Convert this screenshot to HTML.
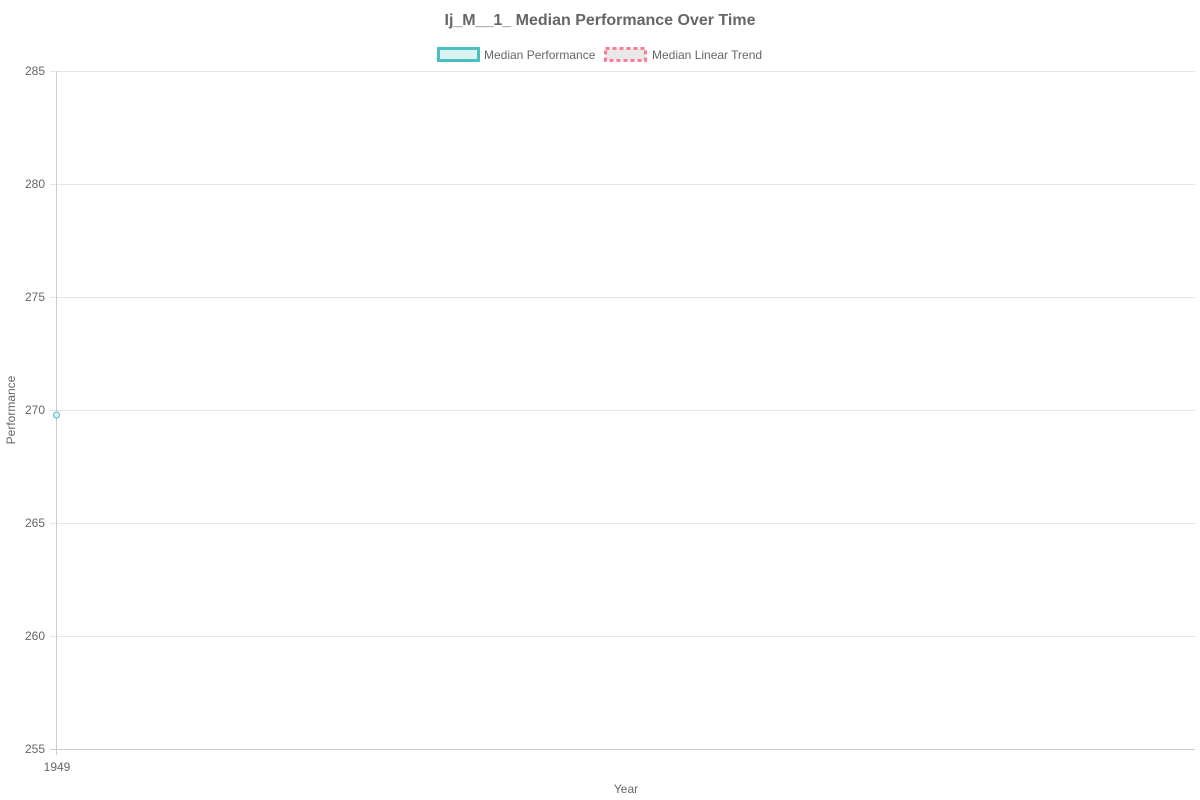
<!DOCTYPE html>
<html><head><style>html,body{margin:0;padding:0;background:#fff;}svg{display:block;}</style></head>
<body>
<svg width="1200" height="800" xmlns="http://www.w3.org/2000/svg" font-family="Liberation Sans, sans-serif">
<text x="600" y="25" text-anchor="middle" font-size="16" font-weight="bold" fill="#666">Ij_M__1_ Median Performance Over Time</text>
<rect x="438.5" y="48.5" width="40" height="12" fill="#dbf2f2" stroke="#4bc0c0" stroke-width="3"/>
<text x="484" y="59" font-size="12" fill="#666">Median Performance</text>
<rect x="605.5" y="48.5" width="40" height="12" fill="#e5e5e5" stroke="#ff6384" stroke-width="3" stroke-dasharray="4,3" opacity="0.85"/>
<text x="652" y="59" font-size="12" fill="#666">Median Linear Trend</text>
<g stroke="#e5e5e5" stroke-width="1">
<line x1="50" y1="71.5" x2="1195" y2="71.5"/>
<line x1="50" y1="184.5" x2="1195" y2="184.5"/>
<line x1="50" y1="297.5" x2="1195" y2="297.5"/>
<line x1="50" y1="410.5" x2="1195" y2="410.5"/>
<line x1="50" y1="523.5" x2="1195" y2="523.5"/>
<line x1="50" y1="636.5" x2="1195" y2="636.5"/>
</g>
<line x1="50" y1="749.5" x2="1195" y2="749.5" stroke="#ccc"/>
<line x1="56.5" y1="71" x2="56.5" y2="755" stroke="#ccc"/>
<g font-size="12" fill="#666" text-anchor="end">
<text x="45" y="75">285</text>
<text x="45" y="188">280</text>
<text x="45" y="301">275</text>
<text x="45" y="414">270</text>
<text x="45" y="527">265</text>
<text x="45" y="640">260</text>
<text x="45" y="753">255</text>
</g>
<text x="57" y="771" font-size="12" fill="#666" text-anchor="middle">1949</text>
<text x="626" y="793" font-size="12" fill="#666" text-anchor="middle">Year</text>
<text transform="translate(15,410) rotate(-90)" font-size="12" fill="#666" text-anchor="middle">Performance</text>
<circle cx="56.5" cy="415" r="3" fill="#dbf2f2" stroke="#4bc0c0" stroke-width="1"/>
</svg>
</body></html>
